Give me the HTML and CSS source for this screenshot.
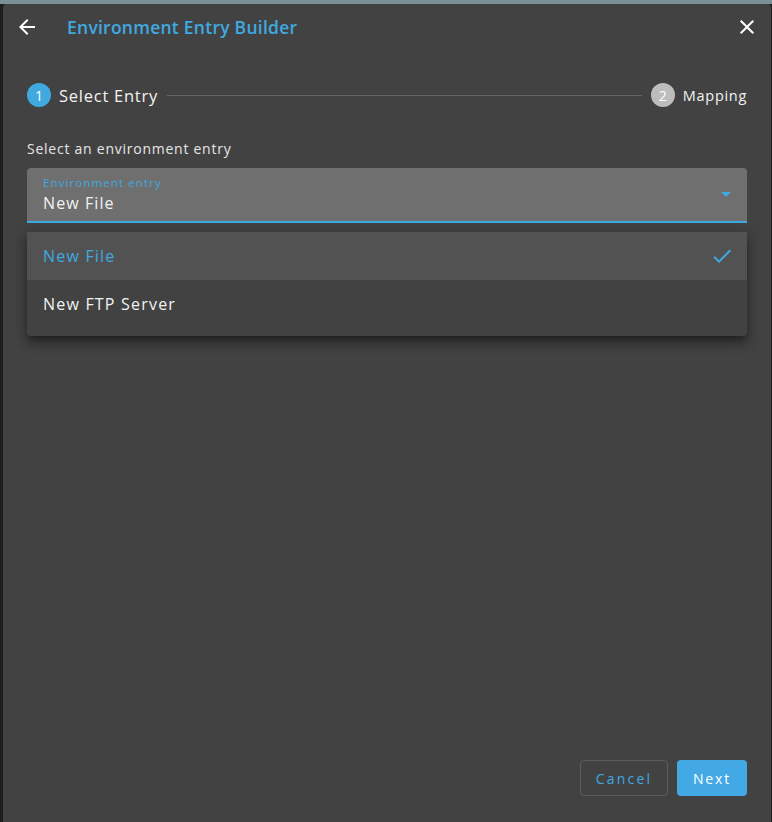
FILE: index.html
```html
<!doctype html>
<html lang="en">
<head>
    <meta charset="utf-8">
    <title>Environment Entry Builder</title>
    <link rel="stylesheet" href="styles.css">
</head>
<body>
    <div class="topstrip"></div>
    <div class="dialog">
        <div class="dialog-header">
            <button type="button" class="icon-button back-button">
                <svg width="24" height="24" viewBox="0 0 24 24"><path d="M20 11H7.83l5.59-5.59L12 4l-8 8 8 8 1.41-1.41L7.83 13H20v-2z" fill="#ffffff"/></svg>
            </button>
            <div class="dialog-title">Environment Entry Builder</div>
            <button type="button" class="icon-button close-button">
                <svg width="24" height="24" viewBox="0 0 24 24"><path d="M19 6.41L17.59 5 12 10.59 6.41 5 5 6.41 10.59 12 5 17.59 6.41 19 12 13.41 17.59 19 19 17.59 13.41 12z" fill="#ffffff"/></svg>
            </button>
        </div>

        <div class="stepper">
            <div class="step active">
                <span class="step-num">1</span>
                <span class="step-label">Select Entry</span>
            </div>
            <div class="step-line"></div>
            <div class="step">
                <span class="step-num">2</span>
                <span class="step-label small">Mapping</span>
            </div>
        </div>

        <div class="content">
            <div class="field-caption">Select an environment entry</div>
            <div class="select-field">
                <div class="select-text">
                    <div class="select-label">Environment entry</div>
                    <div class="select-value">New File</div>
                </div>
                <span class="select-arrow"></span>
            </div>
            <div class="menu">
                <div class="menu-item selected">
                    <span>New File</span>
                    <svg width="24" height="24" viewBox="0 0 24 24"><path d="M9 16.17L4.83 12l-1.42 1.41L9 19 21 7l-1.41-1.41z" fill="#3fa9e0"/></svg>
                </div>
                <div class="menu-item">
                    <span>New FTP Server</span>
                </div>
            </div>
        </div>

        <div class="dialog-actions">
            <button type="button" class="btn btn-outline">Cancel</button>
            <button type="button" class="btn btn-primary">Next</button>
        </div>
    </div>
</body>
</html>
```

FILE: styles.css
```css
html, body {
    margin: 0;
    height: 100%;
}

body {
    background-color: #1e1e1e;
    font-family: "Open Sans", "DejaVu Sans", sans-serif;
    color: #ececec;
    overflow: hidden;
}

.topstrip {
    height: 4px;
    background-color: #7b9096;
}

.dialog {
    margin: 0 1px 0 3px;
    height: 830px;
    background-color: #424242;
    border-radius: 4px 4px 0 0;
    display: flex;
    flex-direction: column;
}

.dialog-header {
    display: flex;
    align-items: center;
    height: 46px;
    padding: 0 12px;
}

.icon-button {
    background: none;
    border: none;
    padding: 0;
    display: flex;
    align-items: center;
    justify-content: center;
    cursor: pointer;
    width: 24px;
    height: 24px;
}

.close-button {
    margin-left: auto;
}

.dialog-title {
    margin-left: 28px;
    font-size: 17.5px;
    font-weight: 600;
    color: #3fa9e0;
    letter-spacing: 0.25px;
}

.stepper {
    display: flex;
    align-items: center;
    padding: 0 24px;
    margin-top: 22px;
    height: 46px;
}

.step {
    display: flex;
    align-items: center;
}

.step-num {
    width: 24px;
    height: 24px;
    border-radius: 50%;
    background-color: #bdbdbd;
    color: #ffffff;
    font-size: 14px;
    display: flex;
    align-items: center;
    justify-content: center;
}

.step.active .step-num {
    background-color: #3fa9e0;
}

.step-label {
    margin-left: 8px;
    font-size: 16.5px;
    color: #f2f2f2;
    letter-spacing: 0.75px;
}

.step-label.small {
    font-size: 14.5px;
    letter-spacing: 0.7px;
}

.step-line {
    flex: 1;
    height: 1px;
    background-color: #646464;
    margin: 0 9px;
}

.content {
    padding: 0 24px;
    margin-top: 21px;
}

.field-caption {
    font-size: 14px;
    color: #e6e6e6;
    margin-bottom: 10px;
    letter-spacing: 0.75px;
}

.select-field {
    height: 53px;
    background-color: #6f6f6f;
    border-radius: 4px 4px 0 0;
    border-bottom: 2px solid #3fa9e0;
    display: flex;
    align-items: center;
    padding: 0 16px;
}

.select-text {
    flex: 1;
}

.select-label {
    font-size: 11.5px;
    color: #3fa9e0;
    letter-spacing: 1.1px;
    line-height: 14px;
}

.select-value {
    font-size: 16px;
    color: #f2f2f2;
    line-height: 22px;
    padding-top: 2px;
    letter-spacing: 1.1px;
}

.select-arrow {
    width: 0;
    height: 0;
    border-left: 5px solid transparent;
    border-right: 5px solid transparent;
    border-top: 5px solid #3fa9e0;
}

.menu {
    margin-top: 9px;
    background-color: #424242;
    border-radius: 0 0 4px 4px;
    padding-bottom: 8px;
    box-shadow: 0 5px 5px -3px rgba(0, 0, 0, 0.3), 0 8px 10px 1px rgba(0, 0, 0, 0.2), 0 3px 14px 2px rgba(0, 0, 0, 0.18);
}

.menu-item {
    height: 48px;
    display: flex;
    align-items: center;
    justify-content: space-between;
    padding: 0 13px 0 16px;
    font-size: 16px;
    color: #f2f2f2;
    letter-spacing: 1.2px;
}

.menu-item.selected {
    background-color: #525252;
    color: #3fa9e0;
}

.dialog-actions {
    margin-top: auto;
    margin-bottom: 38px;
    display: flex;
    justify-content: flex-end;
    gap: 9px;
    padding: 0 24px;
}

.btn {
    height: 36px;
    border-radius: 4px;
    font-family: "Open Sans", "DejaVu Sans", sans-serif;
    font-size: 14px;
    font-weight: 500;
    letter-spacing: 2.2px;
    padding: 0;
}

.btn-outline {
    background: none;
    border: 1px solid #5c5c5c;
    color: #3fa9e0;
    width: 88px;
}

.btn-primary {
    background-color: #42a9e4;
    border: none;
    color: #ffffff;
    width: 70px;
    letter-spacing: 1.8px;
}
```
